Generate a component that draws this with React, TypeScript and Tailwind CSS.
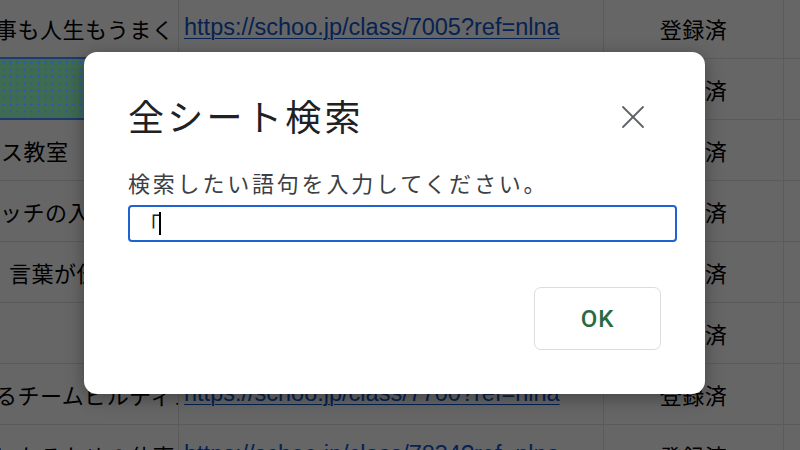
import { X } from 'lucide-react'

const jp = "font-['Noto_Sans_CJK_JP',sans-serif]"

type Row = {
  a: string
  aOffset: string
  link: string
  selected?: boolean
}

const rows: Row[] = [
  { a: '事も人生もうまく', aOffset: 'ml-[-5px]', link: 'https://schoo.jp/class/7005?ref=nlna' },
  { a: '', aOffset: '', link: 'https://schoo.jp/class/7121?ref=nlna', selected: true },
  { a: 'ンス教室', aOffset: 'ml-[-21px]', link: 'https://schoo.jp/class/7233?ref=nlna' },
  { a: 'ッチの入門', aOffset: 'ml-[0px]', link: 'https://schoo.jp/class/7410?ref=nlna' },
  { a: '言葉が伝わる', aOffset: 'ml-[9px]', link: 'https://schoo.jp/class/7512?ref=nlna' },
  { a: '', aOffset: '', link: 'https://schoo.jp/class/7608?ref=nlna' },
  { a: 'るチームビルディング', aOffset: 'ml-[-5px]', link: 'https://schoo.jp/class/7700?ref=nlna' },
  { a: 'になるための仕事', aOffset: 'ml-[-5px]', link: 'https://schoo.jp/class/7834?ref=nlna' },
]

function Sheet() {
  return (
    <div className="mt-[-2px]">
      {rows.map((r, i) => (
        <div
          key={i}
          className="grid h-[61px] grid-cols-[179px_425px_180px_1fr] border-b border-[#e2e3e3]"
        >
          <div className="relative flex items-center overflow-hidden border-r border-[#e2e3e3]">
            {r.a && (
              <span className={`whitespace-nowrap text-[22px] tracking-[0.5px] text-black ${jp} ${r.aOffset}`}>
                {r.a}
              </span>
            )}
          </div>
          <div className="flex items-center overflow-hidden border-r border-[#e2e3e3] pl-[5px]">
            <span className="whitespace-nowrap font-['Liberation_Sans',Arial,sans-serif] text-[23.5px] text-[#1155cc] underline decoration-1 underline-offset-[3px]">
              {r.link}
            </span>
          </div>
          <div className={`flex items-center justify-center border-r border-[#e2e3e3] text-[22px] tracking-[0.5px] text-black ${jp}`}>
            登録済
          </div>
          <div />
        </div>
      ))}
    </div>
  )
}

export default function App() {
  return (
    <div className="relative h-[450px] w-[800px] overflow-hidden bg-white">
      <Sheet />

      {/* dim layer */}
      <div className="absolute inset-0 bg-black/60" />

      {/* selected cell keeps its own tint above the dim layer */}
      <div className="absolute left-0 top-[57px] h-[63px] w-[178px] border-y-[2px] border-[#1b3a72] bg-[#3f6a54] bg-[radial-gradient(#2455c8_0.9px,transparent_1.1px)] bg-[length:7px_7px]" />

      {/* dialog */}
      <div className={`absolute left-[84px] top-[52px] h-[342px] w-[621px] rounded-[13px] bg-white px-[44px] pt-[40px] shadow-[0_4px_18px_rgba(0,0,0,0.35)] ${jp}`}>
        <div className="flex items-start justify-between">
          <h1 className="text-[36px] leading-[46px] tracking-[3.3px] text-[#202124]">全シート検索</h1>
          <button className="mr-[8px] mt-[5px] text-[#5f6368]">
            <X size={40} strokeWidth={1.1} />
          </button>
        </div>

        <p className="mt-[29px] text-[22px] leading-[30px] tracking-[2.8px] text-[#3c4043]">
          検索したい語句を入力してください。
        </p>

        <div className="mt-[8px] flex h-[37px] w-[549px] items-center rounded-[4px] border-[2.5px] border-[#1f63d3] pl-[9px]">
          <span className="text-[21px] leading-none text-[#202124]">「</span>
          <span className="ml-[-1px] inline-block h-[23px] w-[2px] bg-black" />
        </div>

        <div className="mt-[45px] flex justify-end">
          <button className="h-[63px] w-[127px] rounded-[7px] border border-[#dadce0] bg-white font-['Roboto',sans-serif] text-[24px] font-medium tracking-[1px] text-[#266b46]">
            OK
          </button>
        </div>
      </div>
    </div>
  )
}
